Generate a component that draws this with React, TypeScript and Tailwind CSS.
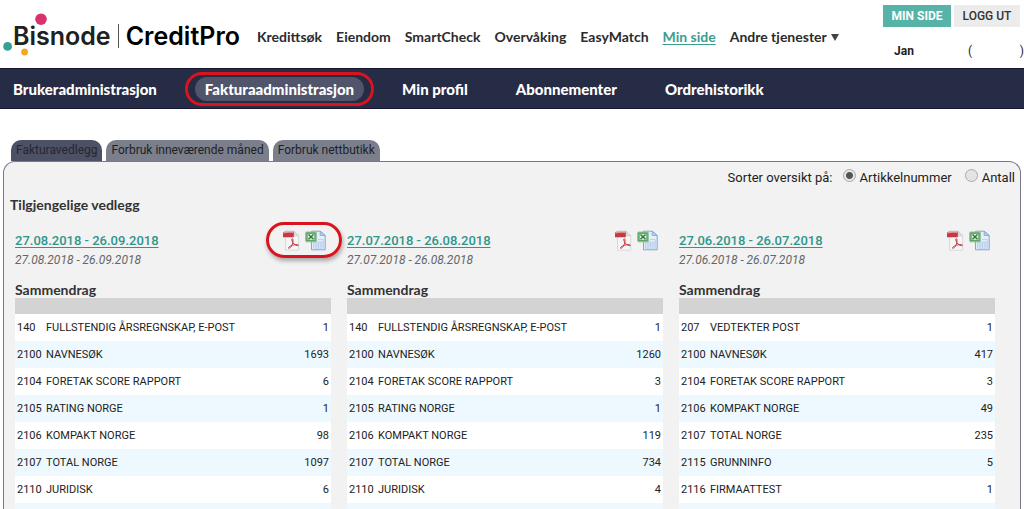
import React from "react";

type Row = [string, string, string];
type Attachment = { period: string; rows: Row[]; highlighted?: boolean };

const services = ["Kredittsøk", "Eiendom", "SmartCheck", "Overvåking", "EasyMatch", "Min side"];
const sections = ["Brukeradministrasjon", "Fakturaadministrasjon", "Min profil", "Abonnementer", "Ordrehistorikk"];
const tabs = ["Fakturavedlegg", "Forbruk inneværende måned", "Forbruk nettbutikk"];

const attachments: Attachment[] = [
  {
    period: "27.08.2018 - 26.09.2018",
    highlighted: true,
    rows: [
      ["140", "FULLSTENDIG ÅRSREGNSKAP, E-POST", "1"],
      ["2100", "NAVNESØK", "1693"],
      ["2104", "FORETAK SCORE RAPPORT", "6"],
      ["2105", "RATING NORGE", "1"],
      ["2106", "KOMPAKT NORGE", "98"],
      ["2107", "TOTAL NORGE", "1097"],
      ["2110", "JURIDISK", "6"],
    ],
  },
  {
    period: "27.07.2018 - 26.08.2018",
    rows: [
      ["140", "FULLSTENDIG ÅRSREGNSKAP, E-POST", "1"],
      ["2100", "NAVNESØK", "1260"],
      ["2104", "FORETAK SCORE RAPPORT", "3"],
      ["2105", "RATING NORGE", "1"],
      ["2106", "KOMPAKT NORGE", "119"],
      ["2107", "TOTAL NORGE", "734"],
      ["2110", "JURIDISK", "4"],
    ],
  },
  {
    period: "27.06.2018 - 26.07.2018",
    rows: [
      ["207", "VEDTEKTER POST", "1"],
      ["2100", "NAVNESØK", "417"],
      ["2104", "FORETAK SCORE RAPPORT", "3"],
      ["2106", "KOMPAKT NORGE", "49"],
      ["2107", "TOTAL NORGE", "235"],
      ["2115", "GRUNNINFO", "5"],
      ["2116", "FIRMAATTEST", "1"],
    ],
  },
];

function Logo() {
  return (
    <a href="#" className="relative flex w-[246px] shrink-0 items-center pl-[13px] pt-1 font-['Inter',sans-serif] text-[25px] font-semibold leading-6 text-[#202020]">
      <svg className="absolute left-0 top-3 h-11 w-14" viewBox="0 0 56 44" aria-hidden="true">
        <circle cx="41" cy="7.2" r="5.8" fill="#d8336c" />
        <circle cx="7.6" cy="34.4" r="4.4" fill="#35a096" />
        <circle cx="24.6" cy="40" r="3.4" fill="#f5a623" />
      </svg>
      <span className="relative">Bisnode</span>
      <span className="mx-[7px] h-6 w-px bg-[#555]" />
      <span className="text-black">CreditPro</span>
    </a>
  );
}

function PdfIcon() {
  return (
    <svg className="h-[21px] w-[18px]" viewBox="0 0 18 21" aria-hidden="true">
      <path d="M3.5 1h8.2l5 4.8v14.4H3.5z" fill="#f6f6f6" stroke="#d2d2d4" strokeWidth=".8" />
      <path d="M11.7 1v4.8h5z" fill="#dedee0" stroke="#c2c2c4" strokeWidth=".6" />
      <path d="M1 3.2Q1 1.7 2.4 1.7h9.4v5.6H1z" fill="#c23a43" />
      <path d="M1.4 3.6q4-1.2 10-.6V1.8H2.6q-1.2 0-1.2 1.8z" fill="#e79a9e" />
      <path d="M7.2 18.4c1.5-.5 4.2-4.9 3.8-8.8-.1-1.3-1.6-1-1.3.3.7 3.2 3.4 5.6 5.8 5.8 1.4.1 1.2-1 -.2-1.1-3.2-.2-7 1.1-8.4 2.5-.7.8-.4 1.4.3 1.3z" fill="none" stroke="#cf3a44" strokeWidth="1" />
    </svg>
  );
}

function ExcelIcon() {
  return (
    <svg className="h-[21px] w-[21px]" viewBox="0 0 21 21" aria-hidden="true">
      <path d="M6.5 1.2h8.7l5 4.3v14.3H6.5z" fill="#e3eefb" stroke="#84a5cf" />
      <path d="M15.2 1.2v4.3h5z" fill="#b5cdea" stroke="#7f9fc9" strokeWidth=".7" />
      <path d="M8.5 12h9.8v6.2H8.5zM11 12v6.2M13.5 12v6.2M16 12v6.2M8.5 14h9.8M8.5 16.1h9.8M13 9.5h5.3v2.5" fill="none" stroke="#b5cbe8" strokeWidth=".8" />
      <rect x=".7" y="2" width="10.6" height="9.8" rx=".8" fill="#62a76a" stroke="#8fc294" />
      <rect x="2.7" y="4" width="6.6" height="5.8" fill="#e3f2e3" />
      <path d="M3.5 4.5l5 4.8M8.5 4.5l-5 4.8" stroke="#2e7d3a" strokeWidth="1.5" />
    </svg>
  );
}

function AttachmentColumn({ period, rows, highlighted }: Attachment) {
  return (
    <section>
      <div className="flex items-start justify-between pr-[5px]">
        <div>
          <a href="#" className="block text-[13px] font-medium leading-[22px] text-[#2f958b] underline underline-offset-2">{period}</a>
          <p className="text-[12px] italic leading-4 text-[#666]">{period}</p>
        </div>
        <div className="relative flex gap-[5px]">
          <a href="#" aria-label="PDF"><PdfIcon /></a>
          <a href="#" aria-label="Excel"><ExcelIcon /></a>
          {highlighted && (
            <span className="pointer-events-none absolute -left-4 -top-2 h-9 w-[76px] rounded-[18px] border-[3px] border-[#d8141c] shadow-[1px_3px_4px_rgba(0,0,0,0.3)]" />
          )}
        </div>
      </div>
      <h3 className="mt-[14px] font-['Lato',sans-serif] text-[14px] font-bold leading-4 text-[#333]">Sammendrag</h3>
      <table className="w-full border-collapse text-[11px] leading-[15px] text-[#222]">
        <thead>
          <tr className="h-4 bg-[#d3d3d3]"><td colSpan={3} /></tr>
        </thead>
        <tbody>
          {rows.map(([code, name, count]) => (
            <tr key={code} className="h-[27px] bg-white even:bg-[#edf9fe]">
              <td className="w-[31px] pl-[2px]">{code}</td>
              <td>{name}</td>
              <td className="pr-[2px] text-right">{count}</td>
            </tr>
          ))}
        </tbody>
        <tfoot>
          <tr className="h-[6px] bg-[#edf9fe]"><td colSpan={3} /></tr>
        </tfoot>
      </table>
    </section>
  );
}

const radio =
  "-mt-[5px] size-[13px] appearance-none rounded-full border border-[#a9a9a9] bg-[#e4e4e4] checked:bg-[radial-gradient(circle,#555_0,#555_3px,#e8e8e8_4px)]";

export default function App() {
  return (
    <div className="min-h-screen bg-white font-['Roboto',sans-serif]">
      <header className="flex h-[68px]">
        <Logo />
        <nav className="flex items-center gap-[14px] pl-[11px] pt-[6px] font-['Lato',sans-serif] text-[14px] font-bold leading-5 text-[#2b2b2b]">
          {services.map((s) => (
            <a key={s} href="#" className={s === "Min side" ? "text-[#3a9d92] underline underline-offset-2 order-1" : ""}>{s}</a>
          ))}
          <button className="order-2 flex items-center gap-1 whitespace-nowrap">
            Andre tjenester
            <svg className="h-[7px] w-2" viewBox="0 0 8 7" aria-hidden="true"><path d="M0 0h8L4 7z" fill="#444" /></svg>
          </button>
        </nav>
        <div className="ml-auto pr-1 pt-[5px]">
          <div className="flex gap-[3px] text-[12px] leading-[22px]">
            <button className="w-[68px] bg-[#57b2a8] font-bold text-white">MIN SIDE</button>
            <button className="w-[66px] bg-[#ececec] font-medium text-[#333]">LOGG UT</button>
          </div>
          <div className="-mr-1 flex pl-[11px] pt-4 text-[12px] leading-4 text-[#222]">
            <span className="w-[74px] font-bold">Jan</span>
            <span className="flex flex-1 justify-between"><span>(</span><span>)</span></span>
          </div>
        </div>
      </header>

      <nav className="flex h-[41px] items-center gap-[28px] border-y border-[#15182e] bg-[#262b46] px-[3px] font-['Lato',sans-serif] text-[15px] font-black leading-6 text-white">
        {sections.map((s) => (
          <a key={s} href="#" className={s === "Fakturaadministrasjon" ? "relative rounded-full bg-[#50556b] px-[10px]" : "px-[10px]"}>
            {s}
            {s === "Fakturaadministrasjon" && (
              <span className="pointer-events-none absolute -inset-x-[10px] -inset-y-[5px] rounded-full border-[3px] border-[#d8141c]" />
            )}
          </a>
        ))}
      </nav>

      <main className="px-[3px] pt-[31px]">
        <div role="tablist" className="flex gap-1 pl-2">
          {tabs.map((t, i) => (
            <button
              key={t}
              role="tab"
              aria-selected={i === 0}
              className={
                i === 0
                  ? "rounded-t-[10px] bg-[#4d5166] px-[5px] text-[12px] leading-[21px] text-[#24262f]"
                  : "rounded-t-[10px] bg-[#7b7e8b] px-[5px] text-[12px] leading-[21px] text-[#1d1f28]"
              }
            >
              {t}
            </button>
          ))}
        </div>
        <div className="rounded-t-xl border border-b-0 border-[#777985] bg-[#f2f2f2]">
          <fieldset className="flex items-center justify-end pr-[5px] pt-[7px] text-[13px] leading-[18px] text-[#222]">
            <span className="mr-[10px]">Sorter oversikt på:</span>
            <input id="sort-article" type="radio" name="sort" defaultChecked className={radio} />
            <label htmlFor="sort-article" className="ml-1 mr-[13px]">Artikkelnummer</label>
            <input id="sort-count" type="radio" name="sort" className={radio} />
            <label htmlFor="sort-count" className="ml-1">Antall</label>
          </fieldset>
          <h2 className="pl-[6px] pt-2 font-['Lato',sans-serif] text-[14px] font-bold leading-5 text-[#333]">Tilgjengelige vedlegg</h2>
          <div className="grid grid-cols-3 gap-4 pl-[11px] pr-[25px] pt-[15px]">
            {attachments.map((a) => <AttachmentColumn key={a.period} {...a} />)}
          </div>
        </div>
      </main>
    </div>
  );
}
